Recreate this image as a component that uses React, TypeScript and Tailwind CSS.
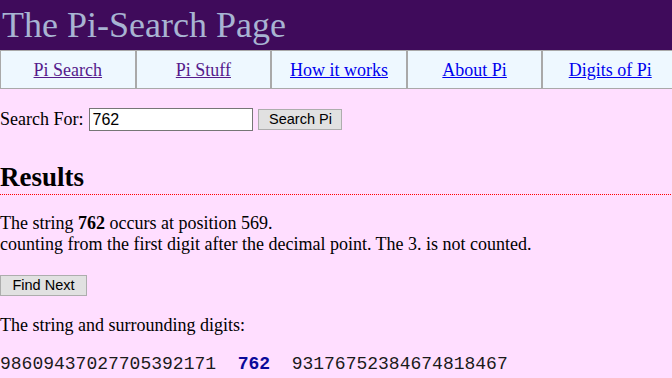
import React from "react";

const navItems = [
  { label: "Pi Search", visited: true },
  { label: "Pi Stuff", visited: true },
  { label: "How it works", visited: false },
  { label: "About Pi", visited: false },
  { label: "Digits of Pi", visited: false },
];

export default function App() {
  return (
    <div className="w-full min-h-screen overflow-hidden bg-[#ffdeff] font-['Liberation_Serif',serif] text-[18px] text-black">
      <div className="h-[50px] bg-[#3f0b5b] pl-[2px] text-[36px] leading-[51px] text-[#a8b4d2] whitespace-nowrap">
        The Pi-Search Page
      </div>
      <div className="w-[678px] grid grid-cols-5 h-[39px]">
        {navItems.map((item) => (
          <div
            key={item.label}
            className="border border-[#a9a9a9] bg-[#eef8ff] flex items-center justify-center leading-[21px] pt-[1px]"
          >
            <a
              href="#"
              className={
                "underline whitespace-nowrap " +
                (item.visited ? "text-[#551a8b]" : "text-[#0000ee]")
              }
            >
              {item.label}
            </a>
          </div>
        ))}
      </div>
      <div className="mt-[19px] h-[23px] flex items-center">
        <span className="leading-[21px]">Search For:</span>
        <input
          defaultValue="762"
          className="ml-[6px] w-[164px] h-[23px] border border-[#767676] bg-white pl-[2px] font-['Liberation_Sans',sans-serif] text-[16px] text-black outline-none"
        />
        <button className="ml-[5px] w-[84px] h-[21px] border border-[#adadad] bg-[#e1e1e1] font-['Liberation_Sans',sans-serif] text-[14.5px] leading-[19px] text-black text-center">
          Search Pi
        </button>
      </div>
      <h2 className="mt-[30px] text-[27px] font-bold leading-[33px] text-black">
        Results
      </h2>
      <div className="h-px w-full bg-[linear-gradient(to_right,#ff0000_50%,transparent_50%)] bg-[length:2px_1px] bg-repeat-x" />
      <p className="mt-[18px] leading-[21px]">
        The string <b>762</b> occurs at position 569.
        <br />
        counting from the first digit after the decimal point. The 3. is not counted.
      </p>
      <button className="mt-[20px] block w-[87px] h-[21px] border border-[#adadad] bg-[#e1e1e1] font-['Liberation_Sans',sans-serif] text-[14.5px] leading-[19px] text-black text-center">
        Find Next
      </button>
      <p className="mt-[19px] leading-[21px]">The string and surrounding digits:</p>
      <div className="mt-[18px] font-['Liberation_Mono',monospace] text-[18px] leading-[20.4px] whitespace-pre text-[#1a1a1a]">
        {"98609437027705392171  "}
        <b className="text-[#0a0a9a]">762</b>
        {"  93176752384674818467"}
      </div>
    </div>
  );
}
